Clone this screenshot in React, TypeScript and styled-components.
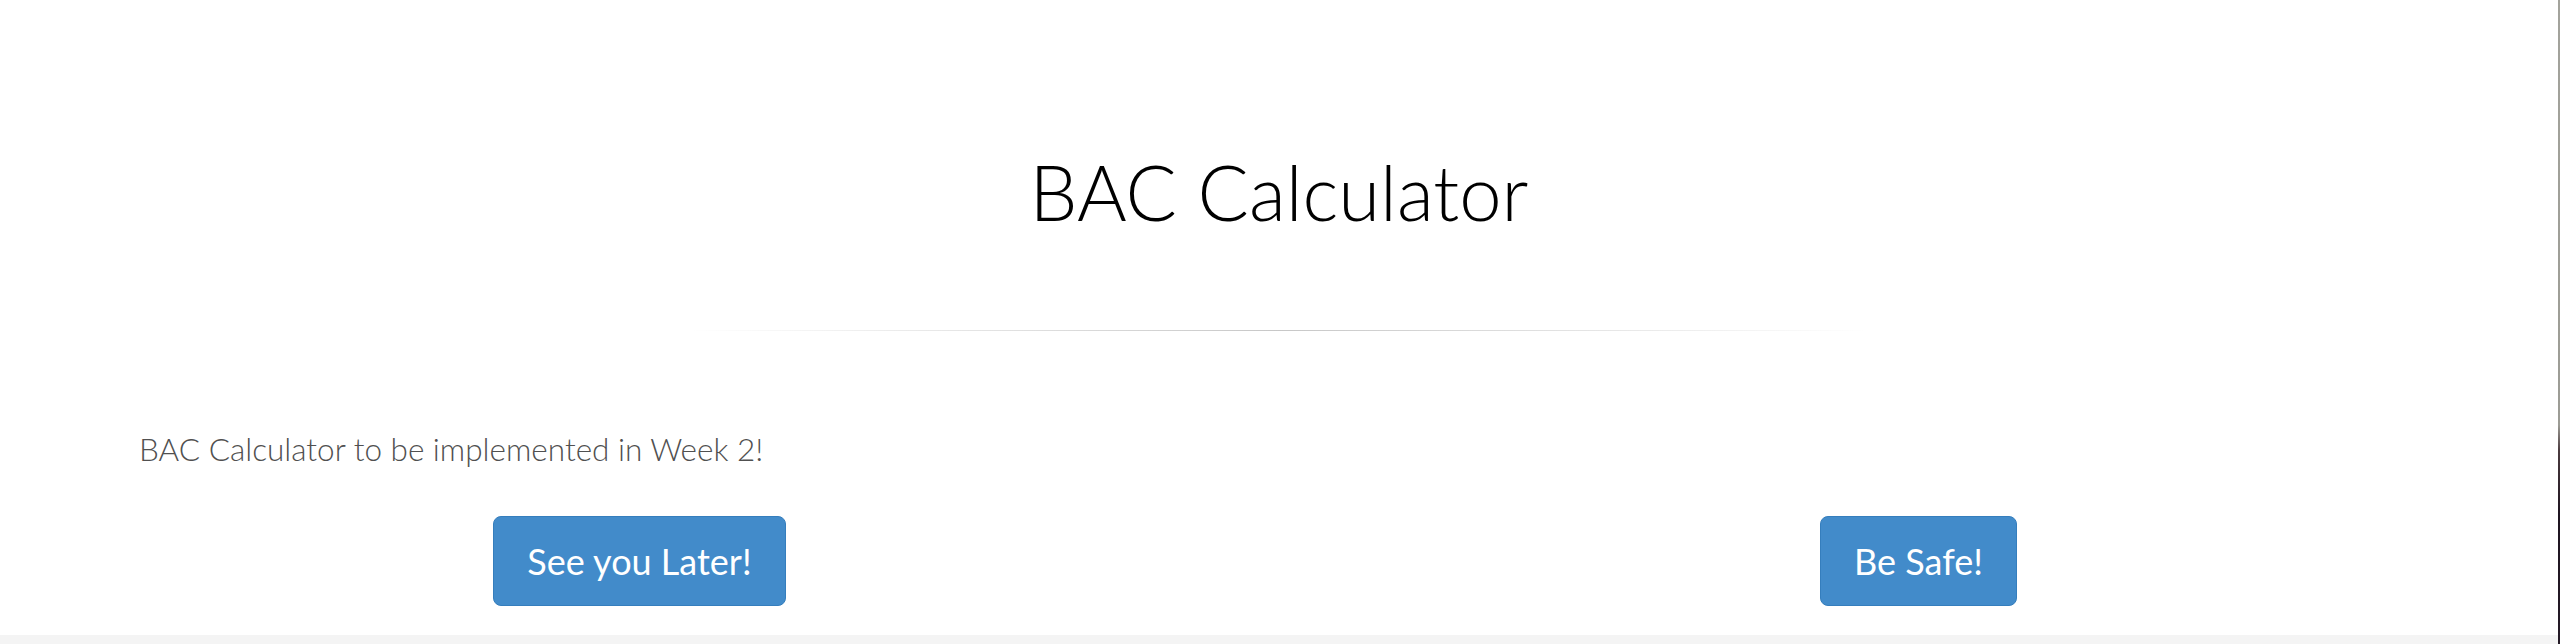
import React from "react";
import styled, { createGlobalStyle } from "styled-components";

const Global = createGlobalStyle`
  html, body { margin: 0; padding: 0; background: #ffffff; }
  body { font-family: "Lato", "Liberation Sans", sans-serif; }
`;

const Page = styled.div`
  display: flex;
  height: 644px;
  overflow: hidden;
`;

const Main = styled.div`
  flex: 1;
  display: flex;
  flex-direction: column;
`;

const Content = styled.main`
  flex: 1;
  background: #ffffff;
`;

const Title = styled.h1`
  margin: 0;
  padding-top: 154px;
  text-align: center;
  font-family: "Lato", "Liberation Sans", sans-serif;
  font-weight: 300;
  font-size: 76px;
  line-height: 1;
  color: #000000;
`;

const Divider = styled.hr`
  width: 1180px;
  height: 1px;
  margin: 100px auto 0;
  border: 0;
  background: linear-gradient(to right, rgba(0, 0, 0, 0), rgba(0, 0, 0, 0.22), rgba(0, 0, 0, 0));
`;

const Note = styled.p`
  margin: 103px 0 0;
  padding-left: 139px;
  font-family: "Lato", "Liberation Sans", sans-serif;
  font-weight: 300;
  font-size: 31.5px;
  line-height: 1;
  color: #505050;
`;

const ButtonRow = styled.div`
  display: grid;
  grid-template-columns: 1fr 1fr;
  justify-items: center;
  margin-top: 50px;
`;

const Button = styled.button`
  height: 90px;
  padding: 0 33px;
  border: 1px solid #357ebd;
  border-radius: 8px;
  background: #428bca;
  color: #ffffff;
  font-family: "Lato", "Liberation Sans", sans-serif;
  font-weight: 400;
  font-size: 36px;
  cursor: pointer;
`;

const Footer = styled.div`
  height: 9px;
  background: #f4f4f4;
`;

const Edge = styled.div`
  width: 2px;
  background: linear-gradient(to bottom, #a3a39c 0%, #9c9c95 66%, #4a3a3e 70%, #1e1420 80%, #241a26 100%);
`;

export default function App() {
  return (
    <>
      <Global />
      <Page>
        <Main>
          <Content>
            <Title>BAC Calculator</Title>
            <Divider />
            <Note>BAC Calculator to be implemented in Week 2!</Note>
            <ButtonRow>
              <Button>See you Later!</Button>
              <Button>Be Safe!</Button>
            </ButtonRow>
          </Content>
          <Footer />
        </Main>
        <Edge />
      </Page>
    </>
  );
}
